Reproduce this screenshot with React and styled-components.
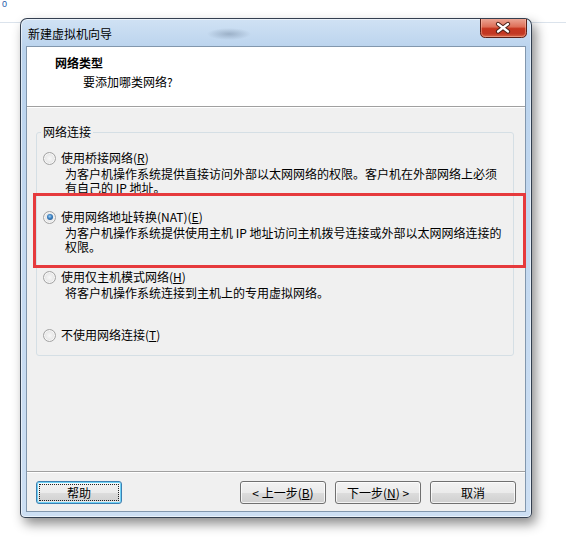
import styled, { createGlobalStyle } from "styled-components";

const GlobalStyle = createGlobalStyle`
  html, body {
    margin: 0;
    padding: 0;
  }
  body {
    background: #fff linear-gradient(to bottom, transparent 22px, #dbe3ec 22px, #dbe3ec 23px, transparent 23px);
    font-family: "Noto Sans CJK SC", "Liberation Sans", sans-serif;
    font-size: 12px;
    color: #000;
  }
`;

const Desktop = styled.div`
  width: 566px;
  height: 537px;
  overflow: hidden;
  display: flex;
  flex-direction: column;
`;

const Crumb = styled.div`
  height: 18px;
  padding-left: 2px;
  color: #1f5aa8;
  font: 9px/9px "Liberation Sans", sans-serif;
  overflow: hidden;
`;

const Window = styled.div`
  margin-left: 20px;
  width: 512px;
  height: 500px;
  box-sizing: border-box;
  border: 1px solid rgba(25, 35, 50, 0.85);
  border-radius: 7px 7px 5px 5px;
  background: linear-gradient(180deg, #d0e2f4 0%, #bad3ed 6%, #c2d8f0 40%, #cddff3 100%);
  box-shadow: inset 0 0 0 1px rgba(255, 255, 255, 0.55), 4px 6px 12px rgba(0, 0, 0, 0.45);
  display: flex;
  flex-direction: column;
  padding-bottom: 5px;
`;

const TitleBar = styled.div`
  height: 27px;
  flex: none;
  display: flex;
  align-items: flex-start;
  padding-right: 4px;
  background: radial-gradient(ellipse 22px 6px at 208px 15px, rgba(80, 100, 125, 0.35), transparent);
`;

const Title = styled.div`
  flex: 1;
  padding: 8px 0 0 7px;
  line-height: 14px;
`;

const CloseButton = styled.div`
  flex: none;
  width: 47px;
  height: 19px;
  line-height: 0;
`;

const Client = styled.div`
  flex: 1;
  margin: 0 5px;
  border: 1px solid #8297ad;
  background: #f0f0f0;
  display: flex;
  flex-direction: column;
`;

const Header = styled.div`
  height: 60px;
  box-sizing: border-box;
  flex: none;
  background: #fff;
  border-bottom: 1px solid #a0a0a0;
  padding: 9px 0 0 28px;
`;

const HeaderTitle = styled.div`
  font-weight: bold;
  line-height: 14px;
`;

const HeaderSub = styled.div`
  margin: 5px 0 0 28px;
  line-height: 14px;
`;

const Body = styled.div`
  flex: 1;
  border-top: 1px solid #fff;
  padding: 17px 11px 0 9px;
`;

const Group = styled.fieldset`
  margin: 0;
  padding: 12px 0 13px;
  min-inline-size: 0;
  border: 1px solid #d5dfe5;
  border-radius: 3px;
`;

const Legend = styled.legend`
  margin-left: 4px;
  padding: 0 2px;
  line-height: 14px;
  font-size: 12px;
`;

const Option = styled.div`
  margin-top: ${(p) => p.$top || 0}px;
  padding-left: 6px;
`;

const OptionLabel = styled.div`
  display: flex;
  align-items: center;
  gap: 5px;
  height: 14px;
  line-height: 14px;
  white-space: nowrap;
`;

const Radio = styled.span`
  position: relative;
  flex: none;
  width: 13px;
  height: 13px;
  box-sizing: border-box;
  border-radius: 50%;
  border: 1px solid #a3a3a3;
  background: radial-gradient(circle at 50% 50%, #f8f8f8 0, #e6e6e6 60%, #d4d4d4 100%);
  box-shadow: inset 0 0 0 1px rgba(255, 255, 255, 0.7);

  &::after {
    content: "";
    display: ${(p) => (p.$checked ? "block" : "none")};
    position: absolute;
    left: 2.5px;
    top: 2.5px;
    width: 6px;
    height: 6px;
    border-radius: 50%;
    background: radial-gradient(circle at 45% 40%, #9fd0f5 0, #3b7fbf 45%, #1b4a80 100%);
  }
`;

const Desc = styled.div`
  margin: 2px 0 0 22px;
  line-height: 14px;
  white-space: nowrap;
`;

const Highlight = styled.div`
  position: relative;
  margin: -2px -13px 0 -4px;
  padding: 14px 0 11px 1px;
  border: 3px solid #e63a3d;
`;

const Key = styled.span`
  text-decoration: underline;
`;

const Footer = styled.div`
  height: 40px;
  box-sizing: border-box;
  flex: none;
  border-top: 1px solid #a0a0a0;
  box-shadow: inset 0 1px 0 #fff;
  padding: 9px 9px 0;
  display: flex;
  gap: 9px;
`;

const Button = styled.div`
  width: 86px;
  height: 23px;
  box-sizing: border-box;
  margin-right: ${(p) => (p.$spaced ? "auto" : "0")};
  border: 1px solid ${(p) => (p.$primary ? "#3c7fb1" : "#707070")};
  border-radius: 3px;
  background: linear-gradient(180deg, #f2f2f2 0%, #ebebeb 50%, #dddddd 51%, #cfcfcf 100%);
  box-shadow: ${(p) =>
    p.$primary
      ? "inset 0 0 0 1px #6fd2f6, inset 0 0 0 2px rgba(255,255,255,0.5)"
      : "inset 0 0 0 1px rgba(255,255,255,0.75)"};
  outline: ${(p) => (p.$primary ? "1px dotted #222" : "none")};
  outline-offset: -4px;
  display: flex;
  align-items: center;
  justify-content: center;
  line-height: 14px;
  white-space: pre;
`;

const CloseIcon = () => (
  <svg width="47" height="19" viewBox="0 0 47 19">
    <defs>
      <linearGradient id="closeFill" x1="0" y1="0" x2="0" y2="1">
        <stop offset="0" stopColor="#eba493" />
        <stop offset="0.42" stopColor="#de6f58" />
        <stop offset="0.52" stopColor="#c6361f" />
        <stop offset="0.8" stopColor="#c23823" />
        <stop offset="1" stopColor="#dc6e4c" />
      </linearGradient>
    </defs>
    <path d="M0.5 0 V13.5 Q0.5 18.5 5.5 18.5 H41.5 Q46.5 18.5 46.5 13.5 V0" fill="url(#closeFill)" stroke="#5a1f17" />
    <path d="M1.5 0 V13 Q1.5 17.5 5.5 17.5 H41.5 Q45.5 17.5 45.5 13 V0" fill="none" stroke="rgba(255,200,180,0.45)" />
    <path d="M18 5 L28 12.5 M28 5 L18 12.5" stroke="#4a2018" strokeWidth="4.2" strokeLinecap="round" />
    <path d="M18 5 L28 12.5 M28 5 L18 12.5" stroke="#fff" strokeWidth="2.2" strokeLinecap="round" />
  </svg>
);

export default function App() {
  return (
    <>
      <GlobalStyle />
      <Desktop>
        <Crumb>0</Crumb>
        <Window>
          <TitleBar>
            <Title>新建虚拟机向导</Title>
            <CloseButton>
              <CloseIcon />
            </CloseButton>
          </TitleBar>
          <Client>
            <Header>
              <HeaderTitle>网络类型</HeaderTitle>
              <HeaderSub>要添加哪类网络?</HeaderSub>
            </Header>
            <Body>
              <Group>
                <Legend>网络连接</Legend>
                <Option>
                  <OptionLabel>
                    <Radio />
                    <span>使用桥接网络(<Key>R</Key>)</span>
                  </OptionLabel>
                  <Desc>
                    为客户机操作系统提供直接访问外部以太网网络的权限。客户机在外部网络上必须
                    <br />
                    有自己的 IP 地址。
                  </Desc>
                </Option>
                <Highlight>
                  <Option>
                    <OptionLabel>
                      <Radio $checked />
                      <span>使用网络地址转换(NAT)(<Key>E</Key>)</span>
                    </OptionLabel>
                    <Desc>
                      为客户机操作系统提供使用主机 IP 地址访问主机拨号连接或外部以太网网络连接的
                      <br />
                      权限。
                    </Desc>
                  </Option>
                </Highlight>
                <Option $top={2}>
                  <OptionLabel>
                    <Radio />
                    <span>使用仅主机模式网络(<Key>H</Key>)</span>
                  </OptionLabel>
                  <Desc>将客户机操作系统连接到主机上的专用虚拟网络。</Desc>
                </Option>
                <Option $top={28}>
                  <OptionLabel>
                    <Radio />
                    <span>不使用网络连接(<Key>T</Key>)</span>
                  </OptionLabel>
                </Option>
              </Group>
            </Body>
            <Footer>
              <Button $primary $spaced>帮助</Button>
              <Button>
                {"< 上一步("}<Key>B</Key>)
              </Button>
              <Button>
                下一步(<Key>N</Key>{") >"}
              </Button>
              <Button>取消</Button>
            </Footer>
          </Client>
        </Window>
      </Desktop>
    </>
  );
}
